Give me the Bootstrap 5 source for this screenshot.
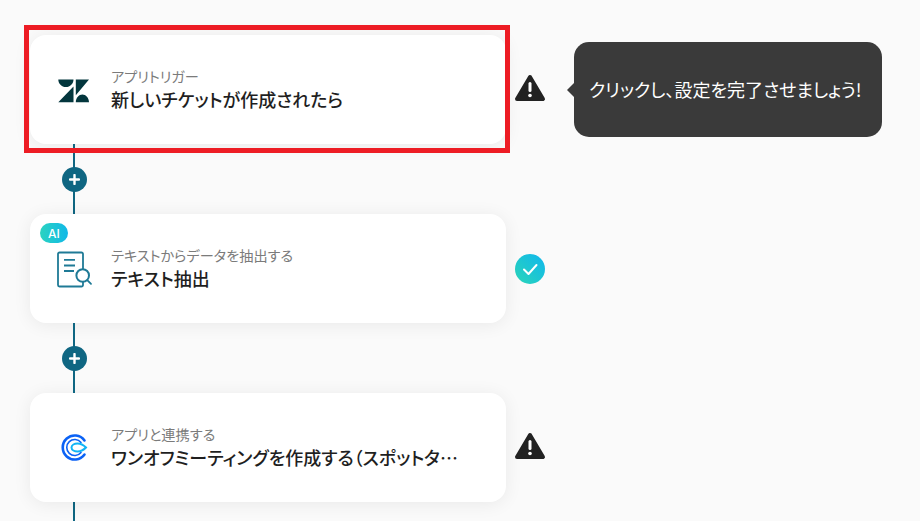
<!DOCTYPE html>
<html lang="ja">
<head>
  <meta charset="UTF-8" />
  <meta name="viewport" content="width=device-width, initial-scale=1">
  <title>フロー</title>
  <link href="https://cdn.jsdelivr.net/npm/bootstrap@5.3.2/dist/css/bootstrap.min.css" rel="stylesheet">
  <style>
    html, body { height: 100%; overflow: hidden; }
    body { background: #fafafa; font-family: "Noto Sans CJK JP", "Noto Sans", sans-serif; color: #1f1f1f; font-feature-settings: "palt"; }
    .flow-wrap { padding: 35px 0 0 30px; }
    .step-row { height: 109px; }
    .step-card { width: 476px; height: 109px; background: #fff; border-radius: 16px; box-shadow: 0 2px 18px rgba(0,0,0,.07); padding-left: 25px; }
    .step-icon { width: 38px; height: 38px; flex: none; margin-right: 18px; }
    .step-sub { font-size: 14.200px; line-height: 18px; color: #7b7b7b; }
    .step-title { font-size: 18px; line-height: 26px; font-weight: 500; width: 350px; margin-top: 1px; }
    .status-icon { width: 32px; height: 32px; margin-left: 8px; margin-top: -3px; flex: none; }
    .status-ok { margin-top: 0; }
    .link-gap { width: 2px; height: 70px; margin-left: 43px; background: #0f6682; }
    .add-btn { width: 25px; height: 25px; border-radius: 50%; background: #0f6682; left: -11.5px; top: 22.500px; border: 0; padding: 0; }
    .link-tail { height: 20px; }
    .ai-tag { left: 10px; top: 9px; width: 28px; height: 20px; border-radius: 10px; background: linear-gradient(90deg, #2bd3c0, #10b8e8); color: #fff; font-size: 12px; font-weight: 500; line-height: 21px; font-family: "Inter", sans-serif; }
    .red-frame { left: 24px; top: 25px; width: 486px; height: 128px; border: 5px solid #ed1c24; }
    .hint-box { left: 574px; top: 42px; width: 308px; height: 95px; background: #3a3a3a; border-radius: 15px; color: #fff; font-size: 18px; padding-left: 15px; }
    .hint-box::before { content: ""; position: absolute; left: -7px; top: 41px; border: 7px solid transparent; border-left: 0; border-right-color: #3a3a3a; }
  </style>
</head>
<body class="position-relative">
<div class="flow-wrap">

  <div class="step-row d-flex align-items-center">
    <div class="step-card d-flex align-items-center">
      <svg class="step-icon" viewBox="0 0 38 38">
        <path fill="#03363d" d="M3.300 8.500h15.200c0 4.200-3.400 7.600-7.600 7.600S3.300 12.700 3.300 8.500ZM18.500 15.500V31.200H3.300ZM20.800 8.500H34L20.800 24.200ZM20.800 31.200c0-4.200 3.300-7.600 6.600-7.600S34 27 34 31.200Z"/>
      </svg>
      <div>
        <div class="step-sub">アプリトリガー</div>
        <div class="step-title">新しいチケットが作成されたら</div>
      </div>
    </div>
    <svg class="status-icon" viewBox="0 0 32 32"><path fill="#222" stroke="#222" stroke-width="4" stroke-linejoin="round" d="M16 5 29 27H3Z"/><rect x="14.500" y="10" width="3" height="10" rx="1.500" fill="#fff"/><circle cx="16" cy="23.500" r="1.800" fill="#fff"/></svg>
  </div>

  <div class="link-gap position-relative">
    <button class="add-btn position-absolute d-flex align-items-center justify-content-center" type="button">
      <svg width="11" height="11" viewBox="0 0 11 11"><path d="M5.500 1V10M1 5.500H10" stroke="#fff" stroke-width="2.400" stroke-linecap="round"/></svg>
    </button>
  </div>

  <div class="step-row d-flex align-items-center">
    <div class="step-card d-flex align-items-center position-relative">
      <span class="ai-tag position-absolute text-center">AI</span>
      <svg class="step-icon" viewBox="0 0 38 38" fill="none" stroke="#1f7a96" stroke-width="1.800">
        <path d="M28 19V4a1.500 1.500 0 0 0-1.500-1.500H4.500A1.500 1.500 0 0 0 3 4v31a1.500 1.500 0 0 0 1.500 1.500h22A1.500 1.500 0 0 0 28 35V32"/>
        <path d="M9 9.800H20M9 15.500H20M9 21H19"/>
        <circle cx="27.700" cy="25.500" r="6.300" stroke-width="2"/>
        <path d="M32.500 30.300 36 33.800" stroke-linecap="round"/>
      </svg>
      <div>
        <div class="step-sub">テキストからデータを抽出する</div>
        <div class="step-title">テキスト抽出</div>
      </div>
    </div>
    <svg class="status-icon status-ok" viewBox="0 0 32 32">
      <defs><linearGradient id="okGrad" x1="0" y1="1" x2="1" y2="0"><stop offset="0" stop-color="#2bd6b8"/><stop offset="1" stop-color="#0fb6ee"/></linearGradient></defs>
      <circle cx="16" cy="16" r="15" fill="url(#okGrad)"/>
      <path d="M10 16.500 14.500 21 22.500 12" fill="none" stroke="#fff" stroke-width="2" stroke-linecap="round" stroke-linejoin="round"/>
    </svg>
  </div>

  <div class="link-gap position-relative">
    <button class="add-btn position-absolute d-flex align-items-center justify-content-center" type="button">
      <svg width="11" height="11" viewBox="0 0 11 11"><path d="M5.500 1V10M1 5.500H10" stroke="#fff" stroke-width="2.400" stroke-linecap="round"/></svg>
    </button>
  </div>

  <div class="step-row d-flex align-items-center">
    <div class="step-card d-flex align-items-center">
      <svg class="step-icon" viewBox="0 0 38 38" fill="none">
        <path d="M29.500 11.500A12 12 0 1 0 29.500 25.500" stroke="#0b62f5" stroke-width="2.600" stroke-linecap="round"/>
        <path d="M26 13.500A8 8 0 1 0 26 23.500" stroke="#0b62f5" stroke-width="1.600" stroke-linecap="round"/>
        <path d="M31 18.500C28 15.500 25.500 14.500 22.500 14.500 19.500 14.500 16.500 16 16.500 18.500S19.500 22.500 22.500 22.500C25.500 22.500 28 21.500 31 18.500Z" stroke="#12b5f5" stroke-width="2"/>
      </svg>
      <div>
        <div class="step-sub">アプリと連携する</div>
        <div class="step-title text-truncate">ワンオフミーティングを作成する（スポットタイム）</div>
      </div>
    </div>
    <svg class="status-icon" viewBox="0 0 32 32"><path fill="#222" stroke="#222" stroke-width="4" stroke-linejoin="round" d="M16 5 29 27H3Z"/><rect x="14.500" y="10" width="3" height="10" rx="1.500" fill="#fff"/><circle cx="16" cy="23.500" r="1.800" fill="#fff"/></svg>
  </div>

  <div class="link-gap link-tail"></div>
</div>

<div class="red-frame position-absolute"></div>
<div class="hint-box position-absolute d-flex align-items-center">クリックし、設定を完了させましょう!</div>
</body>
</html>
